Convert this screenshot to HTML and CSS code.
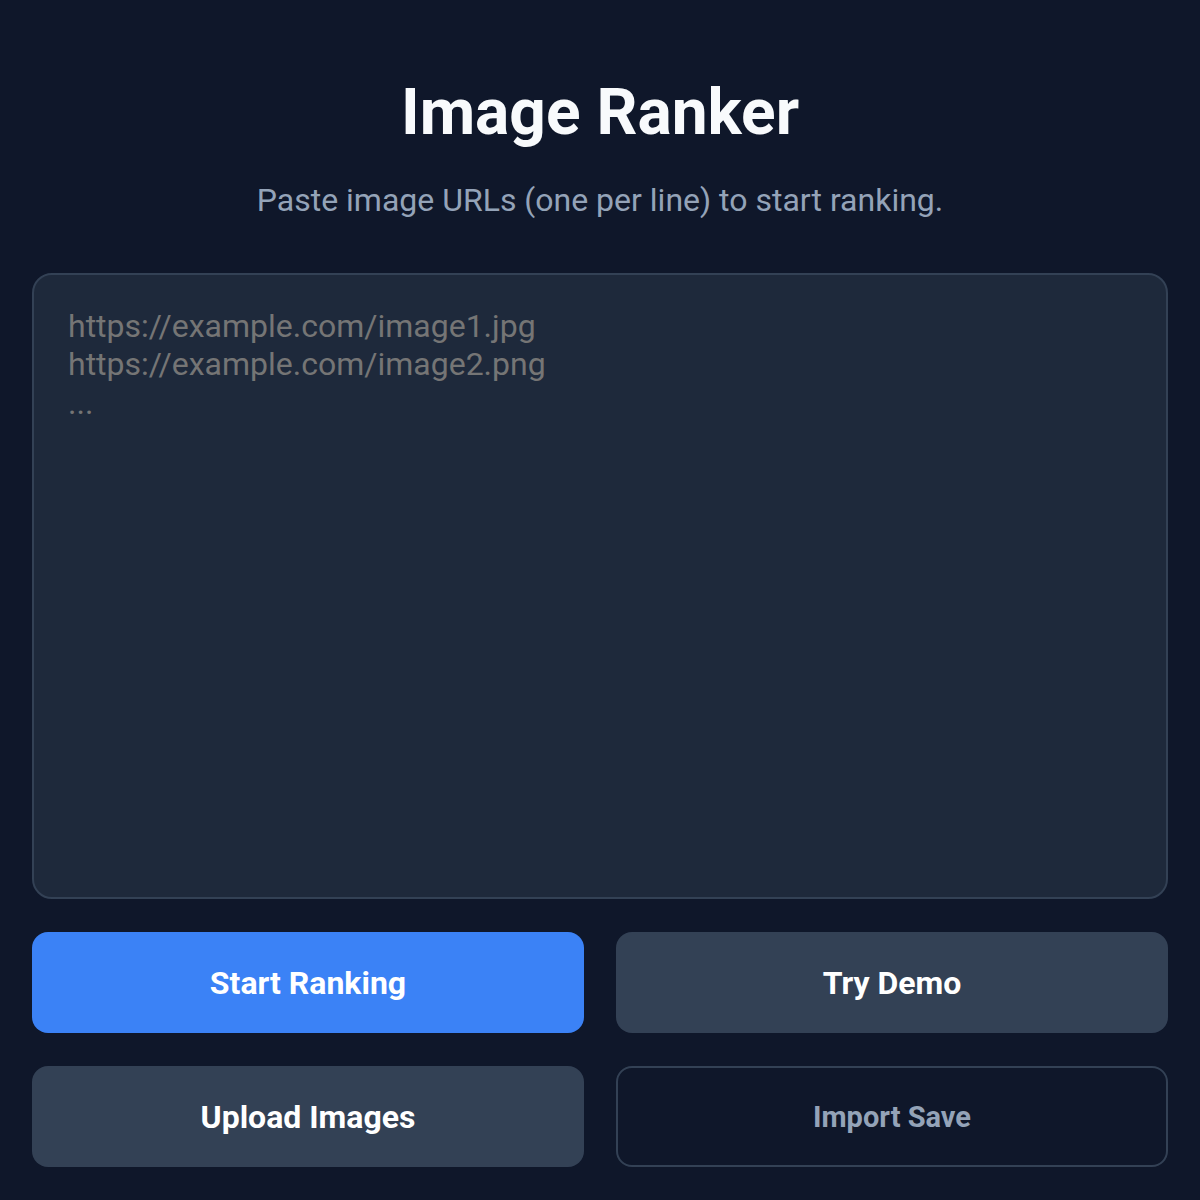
FILE: index.html
```html
<!DOCTYPE html>
<html lang="en">
<head>
<meta charset="utf-8">
<title>Image Ranker</title>
<link rel="stylesheet" href="styles.css">
</head>
<body>
<main class="page">
  <h1 class="title">Image Ranker</h1>
  <p class="subtitle">Paste image URLs (one per line) to start ranking.</p>
  <textarea class="urls" placeholder="https://example.com/image1.jpg
https://example.com/image2.png
..."></textarea>
  <div class="actions">
    <button class="btn btn-primary">Start Ranking</button>
    <button class="btn btn-secondary">Try Demo</button>
    <button class="btn btn-secondary">Upload Images</button>
    <button class="btn btn-outline">Import Save</button>
  </div>
</main>
</body>
</html>
```
FILE: styles.css
```css
html, body {
  margin: 0;
  padding: 0;
  background: #0f172a;
}
body {
  font-family: Roboto, "Noto Sans", sans-serif;
  color: #f8fafc;
}
.page {
  box-sizing: border-box;
  width: 1200px;
  padding: 74px 32px 32px;
  display: flex;
  flex-direction: column;
  align-items: stretch;
}
.title {
  margin: 0;
  font-size: 64px;
  line-height: 77px;
  font-weight: 700;
  text-align: center;
  color: #f8fafc;
}
.subtitle {
  margin: 25px 0 0;
  font-size: 32px;
  line-height: 48px;
  text-align: center;
  color: #94a3b8;
}
.urls {
  box-sizing: border-box;
  margin-top: 49px;
  height: 626px;
  width: 100%;
  padding: 32px 32px 32px 34px;
  background: #1e293b;
  border: 2px solid #334155;
  border-radius: 20px;
  color: #e2e8f0;
  font-family: Roboto, "Noto Sans", sans-serif;
  font-size: 32px;
  line-height: 38.4px;
  resize: none;
  outline: none;
}
.urls::placeholder {
  color: #757575;
}
.actions {
  margin-top: 33px;
  display: grid;
  grid-template-columns: 1fr 1fr;
  gap: 33px 32px;
}
.btn {
  box-sizing: border-box;
  height: 101px;
  border-radius: 16px;
  border: none;
  font-family: Roboto, "Noto Sans", sans-serif;
  font-size: 32px;
  font-weight: 700;
  color: #ffffff;
  cursor: pointer;
}
.btn-primary {
  background: #3b82f6;
}
.btn-secondary {
  background: #334155;
}
.btn-outline {
  background: transparent;
  border: 2px solid #334155;
  color: #94a3b8;
  font-size: 29px;
}
```
